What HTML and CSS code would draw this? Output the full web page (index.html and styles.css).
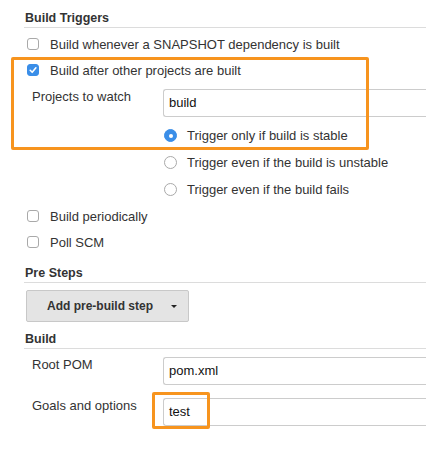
FILE: index.html
```html
<!DOCTYPE html>
<html>
<head>
<meta charset="utf-8">
<link rel="stylesheet" href="styles.css">
</head>
<body>
<div class="page">
  <h2 class="section-title first">Build Triggers</h2>
  <div class="check-list">
    <div class="check-row"><span class="checkbox"></span><span>Build whenever a SNAPSHOT dependency is built</span></div>
    <div class="check-row"><span class="checkbox checked"><svg viewBox="0 0 12 12" width="12" height="12"><path d="M3.2 6.3 L5.2 8.3 L8.9 3.8" fill="none" stroke="#fff" stroke-width="1.6" stroke-linecap="round" stroke-linejoin="round"/></svg></span><span>Build after other projects are built</span></div>
  </div>
  <div class="field-row watch">
    <span class="field-label">Projects to watch</span>
    <div class="text-input">build</div>
  </div>
  <div class="radio-group">
    <div class="radio-row"><span class="radio checked"></span><span>Trigger only if build is stable</span></div>
    <div class="radio-row"><span class="radio"></span><span>Trigger even if the build is unstable</span></div>
    <div class="radio-row"><span class="radio"></span><span>Trigger even if the build fails</span></div>
  </div>
  <div class="check-list tight">
    <div class="check-row"><span class="checkbox"></span><span>Build periodically</span></div>
    <div class="check-row"><span class="checkbox"></span><span>Poll SCM</span></div>
  </div>

  <h2 class="section-title">Pre Steps</h2>
  <button class="dropdown-btn" type="button"><span>Add pre-build step</span><span class="caret"></span></button>

  <h2 class="section-title build">Build</h2>
  <div class="field-row pom">
    <span class="field-label">Root POM</span>
    <div class="text-input">pom.xml</div>
  </div>
  <div class="field-row goals">
    <span class="field-label">Goals and options</span>
    <div class="text-input">test</div>
  </div>

  <div class="highlight highlight-trigger"></div>
  <div class="highlight highlight-goals"></div>
</div>
</body>
</html>
```

FILE: styles.css
```css
html {
  overflow: hidden;
}
html, body {
  margin: 0;
  padding: 0;
  background: #fff;
}
body {
  font-family: "Liberation Sans", Arial, Helvetica, sans-serif;
  font-size: 13px;
  color: #333;
}
.page {
  position: relative;
  display: flow-root;
  box-sizing: border-box;
  padding: 0 0 40px 24px;
}
.section-title {
  margin: 10px 0 0;
  padding: 0 0 1px 1px;
  font-size: 12.5px;
  line-height: 16px;
  font-weight: bold;
  color: #333;
  border-bottom: 1px solid #dcdcdc;
}
.section-title.build {
  margin-top: 9px;
}
.check-list {
  margin-top: 3px;
}
.check-list.tight {
  margin-top: 0;
}
.check-row {
  display: flex;
  align-items: center;
  height: 26px;
  padding-left: 3px;
  gap: 11px;
}
.checkbox {
  width: 12px;
  height: 12px;
  box-sizing: border-box;
  border: 1px solid #a9a9a9;
  border-radius: 3px;
  background: #fff;
  flex: none;
  display: block;
}
.checkbox.checked {
  background: #3a8ee8;
  border-color: #3a8ee8;
  position: relative;
}
.checkbox.checked svg {
  position: absolute;
  left: -1px;
  top: -1px;
}
.field-row {
  display: grid;
  grid-template-columns: 139px 1fr;
  align-items: start;
}
.field-row.watch {
  margin-top: 6px;
}
.field-row.pom {
  margin-top: 8px;
}
.field-row.goals {
  margin-top: 13px;
}
.field-label {
  padding-left: 8px;
  line-height: 15px;
  color: #333;
}
.text-input {
  height: 28px;
  box-sizing: border-box;
  border: 1px solid #cccccc;
  border-right: 0;
  border-radius: 3px 0 0 3px;
  padding: 0 5px;
  line-height: 26px;
  color: #111;
  background: #fff;
}
.radio-group {
  margin-top: 5px;
  padding-left: 140px;
}
.radio-row {
  display: flex;
  align-items: center;
  height: 27px;
  gap: 10px;
}
.radio {
  width: 13px;
  height: 13px;
  box-sizing: border-box;
  border: 1px solid #a9a9a9;
  border-radius: 50%;
  background: #fff;
  flex: none;
  display: flex;
  align-items: center;
  justify-content: center;
}
.radio.checked {
  background: #3a8ee8;
  border-color: #3a8ee8;
}
.radio.checked::after {
  content: "";
  width: 4px;
  height: 4px;
  border-radius: 50%;
  background: #fff;
}
.dropdown-btn {
  margin: 7px 0 0 2px;
  width: 163px;
  height: 32px;
  box-sizing: border-box;
  display: flex;
  align-items: center;
  padding: 0 10px 0 20px;
  gap: 18px;
  white-space: nowrap;
  background: #e4e4e4;
  border: 1px solid #c8c8c8;
  border-radius: 2px;
  font-family: "Liberation Sans", Arial, Helvetica, sans-serif;
  font-size: 12px;
  font-weight: bold;
  color: #333;
}
.caret {
  flex: none;
  width: 0;
  height: 0;
  border-left: 3px solid transparent;
  border-right: 3px solid transparent;
  border-top: 3px solid #222;
  margin-top: 1px;
}
.highlight {
  position: absolute;
  box-sizing: border-box;
  border: 3px solid #f7941e;
  border-radius: 2px;
  pointer-events: none;
}
.highlight-trigger {
  left: 11px;
  top: 57px;
  width: 358px;
  height: 93px;
}
.highlight-goals {
  left: 152px;
  top: 392px;
  width: 58px;
  height: 37px;
}
```
